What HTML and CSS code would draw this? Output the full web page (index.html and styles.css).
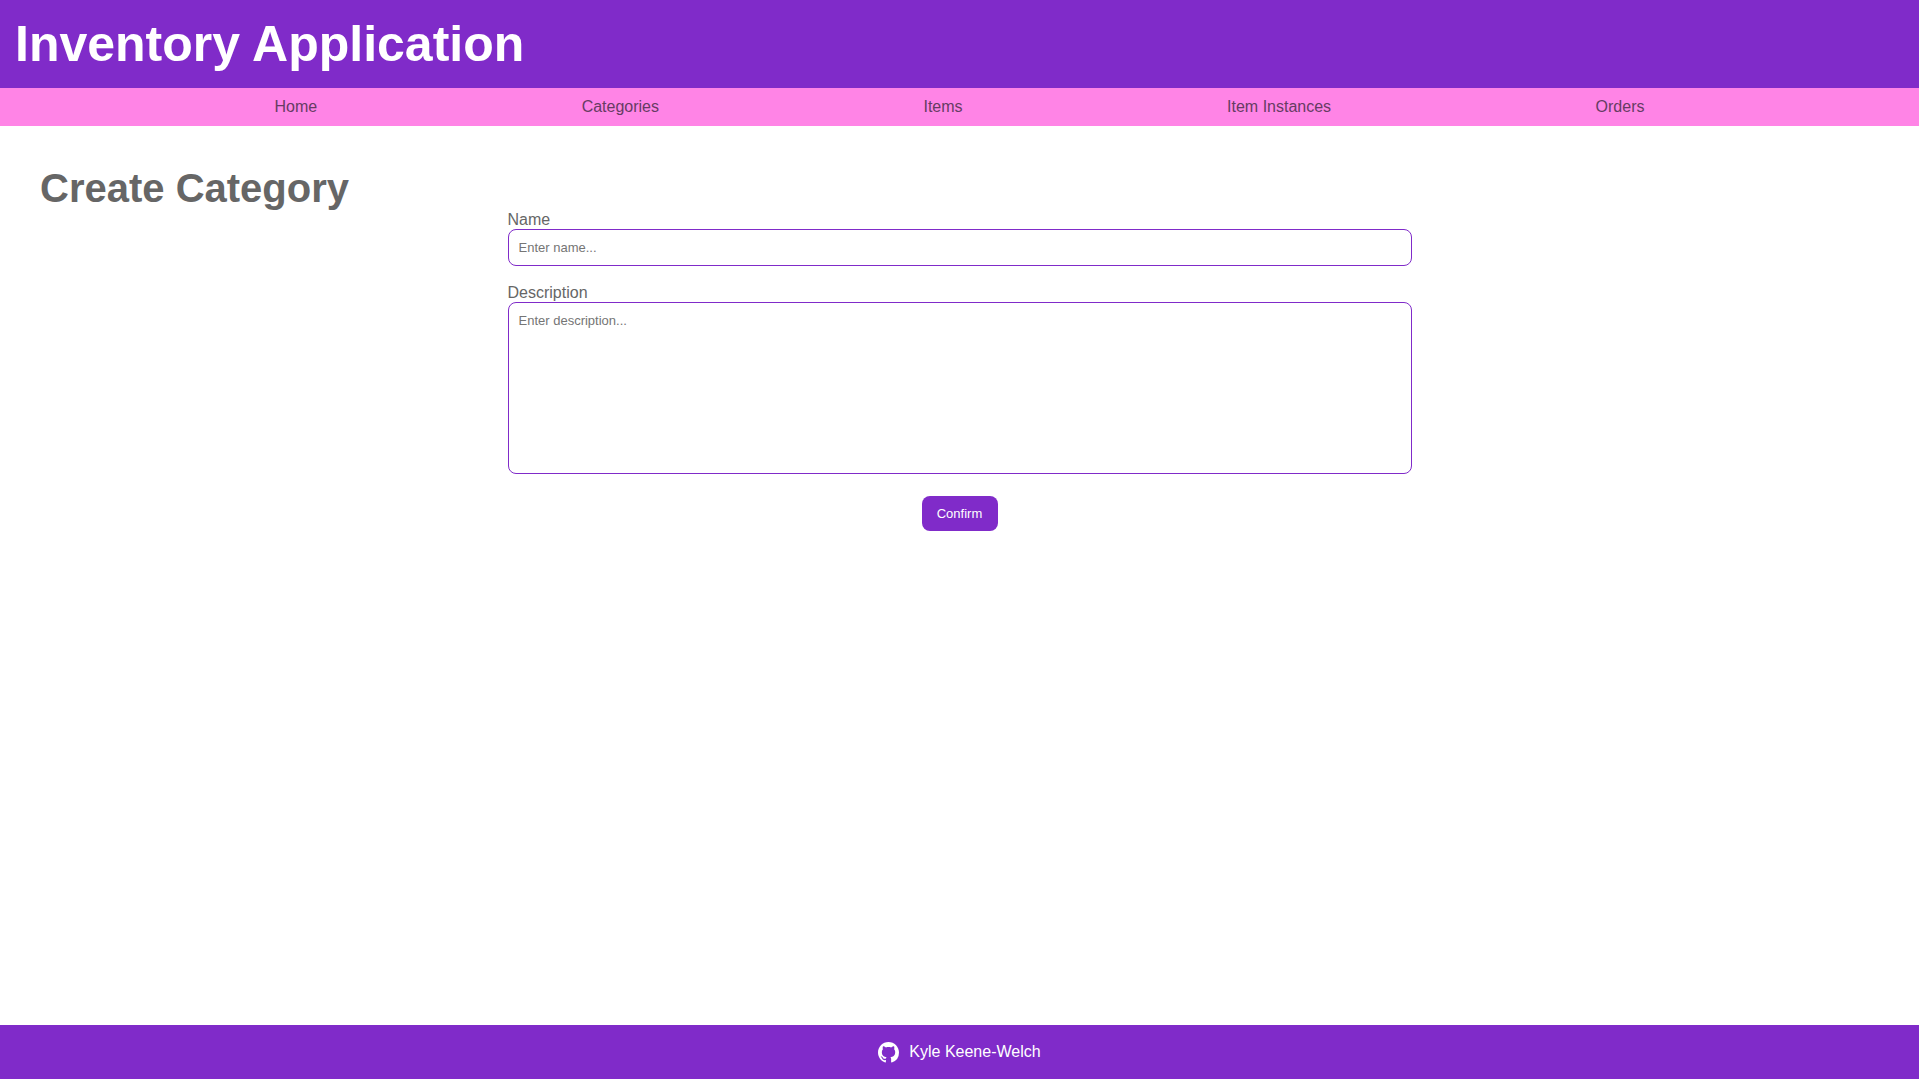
FILE: index.html
```html
<!DOCTYPE html>
<html lang="en">
<head>
  <meta charset="utf-8">
  <meta name="viewport" content="width=device-width, initial-scale=1">
  <title>Create Category</title>
  <link rel="stylesheet" href="styles.css">
</head>
<body>
  <header class="header">
    <p class="site-title">Inventory Application</p>
  </header>
  <nav class="nav">
    <a href="#">Home</a>
    <a href="#">Categories</a>
    <a href="#">Items</a>
    <a href="#">Item Instances</a>
    <a href="#">Orders</a>
  </nav>
  <main class="main">
    <h1 class="page-title">Create Category</h1>
    <form class="form">
      <div class="field">
        <label for="name">Name</label>
        <input class="control" id="name" name="name" type="text" placeholder="Enter name...">
      </div>
      <div class="field">
        <label for="description">Description</label>
        <textarea class="control control-area" id="description" name="description" placeholder="Enter description..."></textarea>
      </div>
      <button class="confirm" type="submit">Confirm</button>
    </form>
  </main>
  <footer class="footer">
    <a class="author" href="#">
      <svg class="github" viewBox="0 0 16 16" aria-hidden="true"><path fill="currentColor" d="M8 0C3.58 0 0 3.58 0 8c0 3.54 2.29 6.53 5.47 7.59.4.07.55-.17.55-.38 0-.19-.01-.82-.01-1.49-2.01.37-2.53-.49-2.69-.94-.09-.23-.48-.94-.82-1.13-.28-.15-.68-.52-.01-.53.63-.01 1.08.58 1.23.82.72 1.21 1.87.87 2.33.66.07-.52.28-.87.51-1.07-1.78-.2-3.64-.89-3.64-3.95 0-.87.31-1.59.82-2.15-.08-.2-.36-1.02.08-2.12 0 0 .67-.21 2.2.82.64-.18 1.32-.27 2-.27s1.36.09 2 .27c1.53-1.04 2.2-.82 2.2-.82.44 1.1.16 1.92.08 2.12.51.56.82 1.27.82 2.15 0 3.07-1.87 3.75-3.65 3.95.29.25.54.73.54 1.48 0 1.07-.01 1.93-.01 2.2 0 .21.15.46.55.38A8.01 8.01 0 0 0 16 8c0-4.42-3.58-8-8-8z"/></svg>
      Kyle Keene-Welch
    </a>
  </footer>
</body>
</html>
```
FILE: styles.css
```css
:root {
  --purple: #802bc9;
  --pink: #ff84e6;
  --text: #666;
}

* {
  box-sizing: border-box;
}

body {
  display: flex;
  flex-direction: column;
  min-height: 100vh;
  margin: 0;
  color: var(--text);
  font: 16px/18px "Liberation Sans", Arial, sans-serif;
}

.header {
  padding: 15px;
  background: var(--purple);
  color: #fff;
}

.site-title {
  margin: 0;
  font-size: 50px;
  line-height: 58px;
  font-weight: bold;
}

.nav {
  display: flex;
  justify-content: space-evenly;
  padding: 10px;
  background: var(--pink);
}

.nav a {
  color: #663c63;
  text-decoration: none;
}

.main {
  flex: 1;
  padding: 40px;
}

.page-title {
  margin: 0;
  font-size: 40px;
  line-height: 45px;
}

.form {
  display: flex;
  flex-direction: column;
  gap: 18px;
  max-width: 904px;
  margin: 0 auto;
}

.field {
  display: flex;
  flex-direction: column;
}

.control {
  padding: 10px;
  border: 1px solid var(--purple);
  border-radius: 8px;
  background: #fff;
  color: var(--text);
  font: 13px/15px "Liberation Sans", Arial, sans-serif;
}

.control::placeholder {
  color: #757575;
}

.control-area {
  height: 172px;
  resize: none;
}

.confirm {
  align-self: center;
  min-width: 76px;
  margin-top: 4px;
  padding: 10px 15px;
  border: 0;
  border-radius: 8px;
  background: var(--purple);
  color: #fff;
  font: 13px/15px "Liberation Sans", Arial, sans-serif;
}

.footer {
  display: flex;
  justify-content: center;
  padding: 16px;
  background: var(--purple);
}

.author {
  display: flex;
  align-items: center;
  gap: 10px;
  color: #fff;
  line-height: 22px;
  text-decoration: none;
}

.github {
  width: 21px;
  height: 21px;
}
```
